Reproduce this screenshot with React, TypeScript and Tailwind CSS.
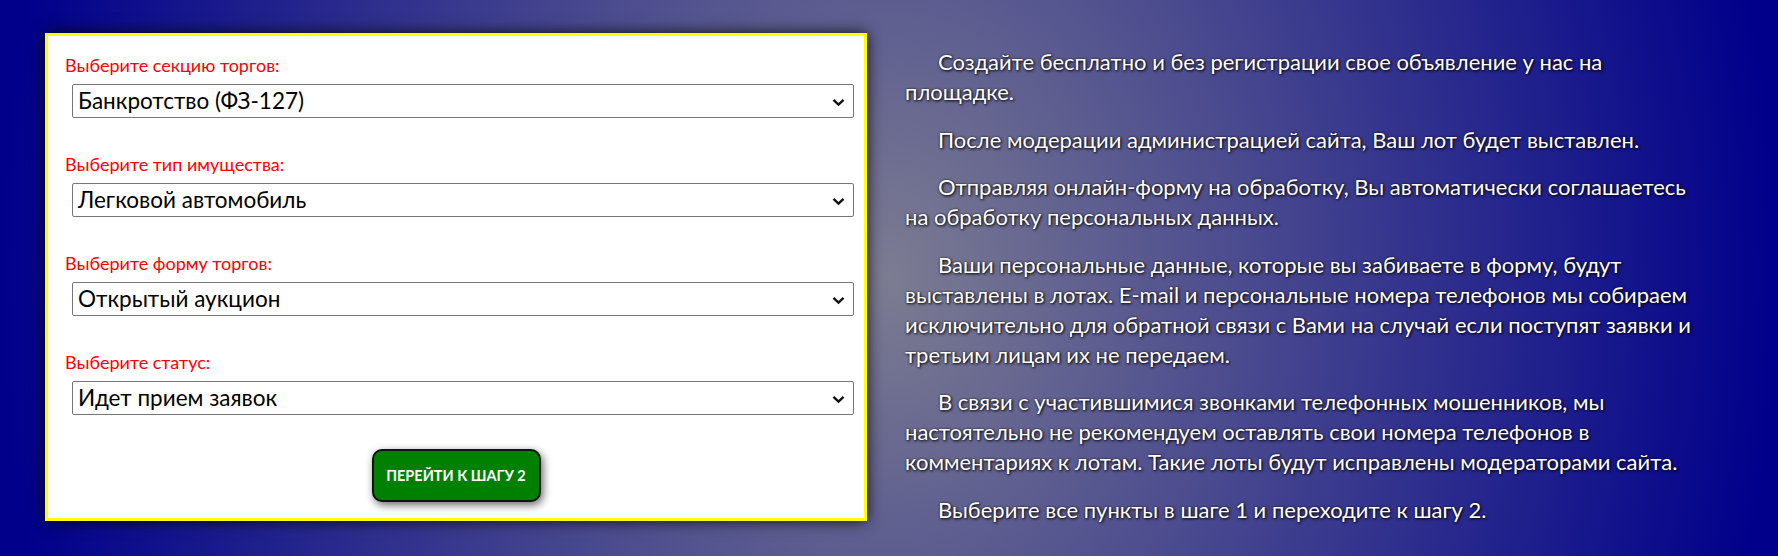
import React from "react";

const fields = [
  { label: "Выберите секцию торгов:", value: "Банкротство (ФЗ-127)" },
  { label: "Выберите тип имущества:", value: "Легковой автомобиль" },
  { label: "Выберите форму торгов:", value: "Открытый аукцион" },
  { label: "Выберите статус:", value: "Идет прием заявок" },
];

function Chevron() {
  return (
    <svg width="13" height="9" viewBox="0 0 13 9" className="absolute right-[8px] top-[13px]">
      <path d="M1.5 1.8 L6.5 6.6 L11.5 1.8" fill="none" stroke="#111" strokeWidth="2.4" />
    </svg>
  );
}

export default function App() {
  return (
    <div className="w-[1778px] h-[556px] overflow-hidden bg-[radial-gradient(ellipse_50%_200%_at_50%_50%,#7c7c92_0%,#00008b_100%)] font-['Lato','Open_Sans',sans-serif] flex">
      <div className="ml-[45px] mt-[33px] w-[822px] h-[488px] border-[3px] border-[#ffff00] bg-white shadow-[0_0_14px_rgba(0,0,0,0.85)] pt-[17px] pl-[17px] pr-[10px] flex flex-col">
        {fields.map((f) => (
          <div key={f.label} className="flex flex-col mb-[34px]">
            <div className="h-[24px] leading-[24px] text-[18px] text-[#ff0000]">{f.label}</div>
            <div className="relative ml-[7px] mt-[7px] w-[782px] h-[34px] border border-[#767676] rounded-[2px] bg-white pl-[5px] flex items-center text-[22.5px] text-black">
              {f.value}
              <Chevron />
            </div>
          </div>
        ))}
        <div className="flex justify-center pr-[7px]">
          <button className="w-[169px] h-[53px] rounded-[10px] border-2 border-[#111] bg-[#008000] text-white font-bold text-[14.5px] shadow-[2px_3px_8px_rgba(0,0,0,0.6)]">
            ПЕРЕЙТИ К ШАГУ 2
          </button>
        </div>
      </div>
      <div className="ml-[38px] mt-[47px] w-[830px] text-white text-[22px] leading-[30px] [text-shadow:1px_1px_3px_#000,0_0_2px_rgba(0,0,0,0.6)]">
        <p className="indent-[33px] mb-[17.6px]">Создайте бесплатно и без регистрации свое объявление у нас на<br />площадке.</p>
        <p className="indent-[33px] mb-[17.6px]">После модерации администрацией сайта, Ваш лот будет выставлен.</p>
        <p className="indent-[33px] mb-[17.6px]">Отправляя онлайн-форму на обработку, Вы автоматически соглашаетесь<br />на обработку персональных данных.</p>
        <p className="indent-[33px] mb-[17.6px]">Ваши персональные данные, которые вы забиваете в форму, будут выставлены в лотах. E-mail и персональные номера телефонов мы собираем исключительно для обратной связи с Вами на случай если поступят заявки и третьим лицам их не передаем.</p>
        <p className="indent-[33px] mb-[17.6px]">В связи с участившимися звонками телефонных мошенников, мы настоятельно не рекомендуем оставлять свои номера телефонов в комментариях к лотам. Такие лоты будут исправлены модераторами сайта.</p>
        <p className="indent-[33px]">Выберите все пункты в шаге 1 и переходите к шагу 2.</p>
      </div>
    </div>
  );
}
